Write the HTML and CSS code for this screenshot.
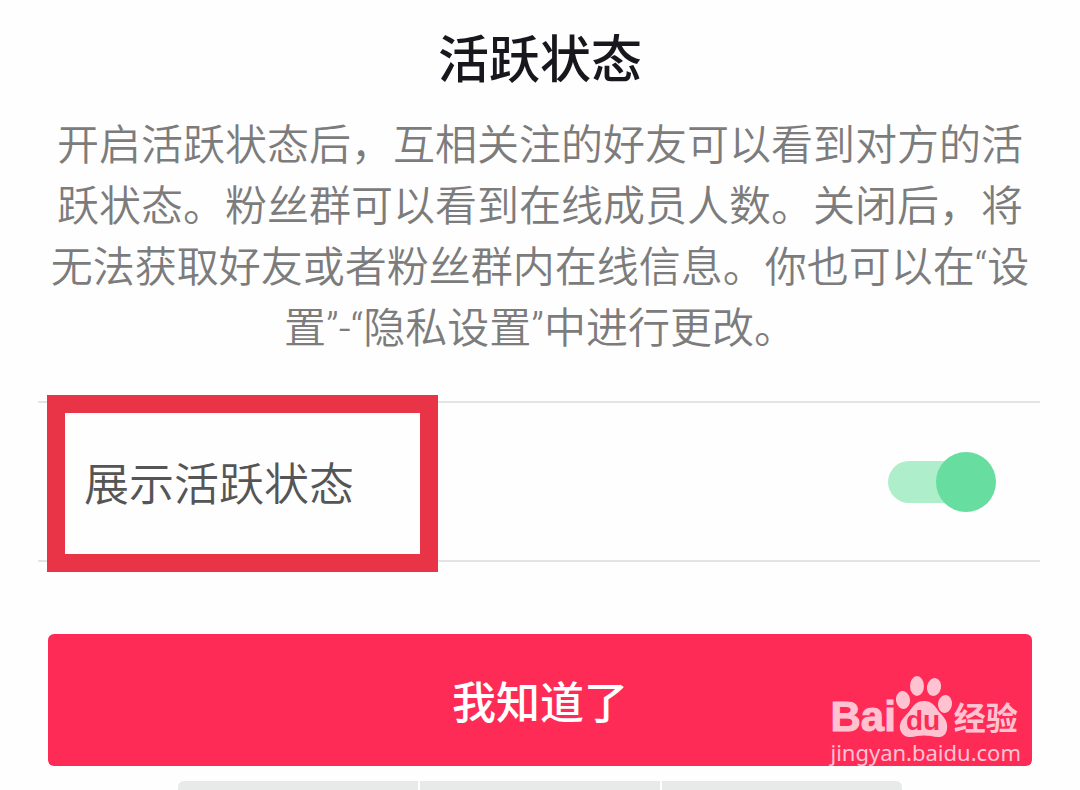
FILE: index.html
```html
<!DOCTYPE html>
<html lang="zh-CN">
<head>
<meta charset="utf-8">
<meta name="viewport" content="width=device-width, initial-scale=1">
<title>活跃状态</title>
<link rel="stylesheet" href="styles.css">
</head>
<body>
<main class="sheet">
  <h1 class="title">活跃状态</h1>
  <p class="description">开启活跃状态后，互相关注的好友可以看到对方的活跃状态。粉丝群可以看到在线成员人数。关闭后，将无法获取好友或者粉丝群内在线信息。你也可以在“设置”-“隐私设置”中进行更改。</p>
  <div class="setting">
    <label class="setting-label" for="show-status">展示活跃状态</label>
    <input class="switch" type="checkbox" role="switch" id="show-status" checked>
    <span class="highlight"></span>
  </div>
  <div class="actions">
    <button class="confirm" type="button">我知道了</button>
    <div class="watermark">
      <div class="brand">
        <span class="brand-name">Bai</span>
        <svg class="paw" viewBox="0 0 58 62" aria-hidden="true">
          <ellipse cx="7" cy="24" rx="7" ry="9" transform="rotate(-8 7 24)"/>
          <ellipse cx="21" cy="10" rx="7" ry="10"/>
          <ellipse cx="38" cy="11" rx="7" ry="9" transform="rotate(12 38 11)"/>
          <ellipse cx="49" cy="28" rx="7" ry="9" transform="rotate(8 49 28)"/>
          <path d="M28 25C19 25 17 31 12 37C7 42 3 46 4 53C6 62 15 62 21 60Q28 59 35 60C42 62 50 62 51 53C52 46 49 42 44 37C39 31 37 25 28 25Z"/>
          <text class="paw-text" x="27" y="54" text-anchor="middle">du</text>
        </svg>
        <span class="brand-suffix">经验</span>
      </div>
      <span class="site">jingyan.baidu.com</span>
    </div>
  </div>
</main>
<div class="tabs">
  <span class="tab"></span>
  <span class="tab"></span>
  <span class="tab"></span>
</div>
</body>
</html>
```

FILE: styles.css
```css
* {
  box-sizing: border-box;
}

body {
  margin: 0;
  background: #fefefe;
  font-family: Roboto, "Noto Sans CJK SC", sans-serif;
}

.sheet {
  padding: 31px 48px 0;
}

.title {
  margin: 0;
  color: #17171d;
  font-size: 51px;
  font-weight: 500;
  line-height: 60px;
  text-align: center;
}

.description {
  margin: 24px 0 42px;
  color: #7c7c7c;
  font-size: 42px;
  font-weight: 350;
  line-height: 61px;
  text-align: center;
}

.setting {
  position: relative;
  display: flex;
  align-items: center;
  justify-content: space-between;
  height: 161px;
  margin: 0 -8px 0 -10px;
  padding: 0 44px 0 46px;
  border: solid #e3e5e5;
  border-width: 2px 0;
}

.setting-label {
  padding-top: 8px;
  color: #555;
  font-size: 45px;
  font-weight: 350;
  line-height: 60px;
}

.switch {
  position: relative;
  appearance: none;
  display: flex;
  align-items: center;
  justify-content: flex-end;
  width: 108px;
  height: 60px;
  margin: 0;
}

.switch::before {
  content: "";
  position: absolute;
  inset: 9px 10px 9px 0;
  border-radius: 21px;
  background: #aeeecb;
}

.switch::after {
  content: "";
  position: relative;
  width: 60px;
  height: 60px;
  border-radius: 50%;
  background: #68dda0;
}

.highlight {
  position: absolute;
  top: -8px;
  bottom: -12px;
  left: 9px;
  width: 391px;
  border: 18px solid #e93448;
  pointer-events: none;
}

.actions {
  position: relative;
  margin-top: 72px;
}

.confirm {
  display: block;
  width: 100%;
  padding: 40px 32px 32px;
  border: 0;
  border-radius: 6px;
  background: #ff2b57;
  color: #fff;
  font-family: inherit;
  font-size: 44px;
  font-weight: 500;
  line-height: 60px;
}

.watermark {
  position: absolute;
  right: 11px;
  bottom: 0;
  color: #ffc2d1;
}

.brand {
  display: flex;
  align-items: flex-end;
}

.brand-name {
  font-family: "Liberation Sans", sans-serif;
  font-size: 42px;
  font-weight: 700;
  line-height: 42px;
  -webkit-text-stroke: 1px #ffc2d1;
}

.paw {
  width: 58px;
  height: 62px;
  fill: #ffc2d1;
}

.paw-text {
  fill: #ff2b57;
  font-family: "Liberation Sans", sans-serif;
  font-size: 28px;
  font-weight: 700;
}

.brand-suffix {
  font-size: 32px;
  font-weight: 700;
  line-height: 38px;
}

.site {
  display: block;
  font-family: "Noto Sans", sans-serif;
  font-size: 22px;
  line-height: 28px;
}

.tabs {
  display: flex;
  gap: 2px;
  width: 67%;
  height: 9px;
  margin: 15px auto 0;
  overflow: hidden;
  border-radius: 6px 6px 0 0;
}

.tab {
  flex: 1;
  background: #e8eaea;
}
```
